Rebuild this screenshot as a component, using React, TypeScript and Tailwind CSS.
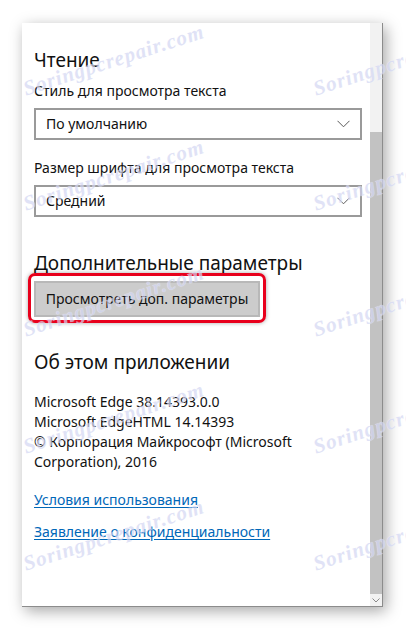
import React from "react";

const font = { fontFamily: '"Noto Sans", "Open Sans", sans-serif' };

function Chevron({ className }: { className?: string }) {
  return (
    <svg width="13" height="8" viewBox="0 0 13 8" className={className}>
      <path d="M0.5 0.8 L6.5 6.8 L12.5 0.8" fill="none" stroke="#5a5a5a" strokeWidth="1" />
    </svg>
  );
}

function Select({ value }: { value: string }) {
  return (
    <div className="flex h-[32px] w-[328px] items-center justify-between border-2 border-[#9a9a9a] bg-white pl-[10px] pr-[10px]">
      <span className="text-[14px] leading-[20px] text-[#111]">{value}</span>
      <Chevron />
    </div>
  );
}

// watermark rows (same y for left and right column)
const rows = [74, 189, 315, 432, 549];

export default function App() {
  return (
    <div className="relative h-[630px] w-[406px] overflow-hidden bg-white" style={font}>
      <div className="ml-[22px] mt-[23px] flex h-[584px] w-[361px] border-b border-r border-[#8c8c8c] bg-white shadow-[3px_4px_14px_rgba(0,0,0,0.35)]">
        <div className="flex flex-1 flex-col pl-[12px] pt-[23px] text-[#111]">
          <h2 className="text-[19px] leading-[28px]">Чтение</h2>
          <p className="mt-[7px] text-[14px] leading-[20px]">Стиль для просмотра текста</p>
          <div className="mt-[7px]">
            <Select value="По умолчанию" />
          </div>
          <p className="mt-[18px] text-[14px] leading-[20px]">Размер шрифта для просмотра текста</p>
          <div className="mt-[7px]">
            <Select value="Средний" />
          </div>

          <h2 className="mt-[32px] text-[19px] leading-[28px]">Дополнительные параметры</h2>
          <div className="relative mt-[4px] self-start">
            <div className="absolute -bottom-[6px] -left-[6px] -right-[6px] -top-[8px] rounded-[7px] border-[3px] border-[#e8001c] shadow-[0_0_4px_rgba(0,0,0,0.35)]" />
            <button
              type="button"
              className="relative flex h-[36px] w-[226px] items-center justify-center border-2 border-[#b8b8b8] bg-[#cccccc] text-[14px] leading-[20px] text-[#111]"
            >
              Просмотреть доп. параметры
            </button>
          </div>

          <h2 className="mt-[31px] text-[19px] leading-[28px]">Об этом приложении</h2>
          <div className="mt-[16px] text-[14px] leading-[20px]">
            <p>Microsoft Edge 38.14393.0.0</p>
            <p>Microsoft EdgeHTML 14.14393</p>
            <p>© Корпорация Майкрософт (Microsoft</p>
            <p>Corporation), 2016</p>
          </div>
          <a className="mt-[18px] self-start text-[14px] leading-[20px] text-[#0067b8] underline underline-offset-2">Условия использования</a>
          <a className="mt-[12px] self-start text-[14px] leading-[20px] text-[#0067b8] underline underline-offset-2">Заявление о конфиденциальности</a>
        </div>

        <div className="flex w-[12px] flex-col bg-[#f2f2f2]">
          <div className="h-[109px]" />
          <div className="flex-1 bg-[#c2c2c2]" />
          <div className="flex h-[12px] items-center justify-center">
            <svg width="8" height="5" viewBox="0 0 8 5">
              <path d="M0.5 0.5 L4 4 L7.5 0.5" fill="none" stroke="#8a8a8a" strokeWidth="1" />
            </svg>
          </div>
        </div>
      </div>

      {rows.flatMap((top) =>
        [24, 314].map((left) => (
          <span
            key={`${left}-${top}`}
            className="pointer-events-none absolute origin-left -rotate-[18deg] whitespace-nowrap text-[21px] font-bold italic tracking-[1px] text-[#d3d7f3] opacity-70"
            style={{ left, top, fontFamily: '"Liberation Serif", serif', textShadow: "0 0 1px #fff" }}
          >
            Soringpcrepair.com
          </span>
        ))
      )}
    </div>
  );
}
